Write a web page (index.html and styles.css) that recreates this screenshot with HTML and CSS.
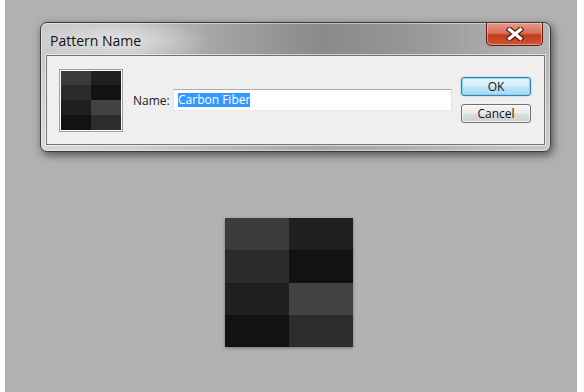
FILE: index.html
```html
<html>
<head>
    <title>Pattern Name</title>
    <link rel="stylesheet" href="styles.css">
</head>
<body>
    <div class="canvas">
        <div class="dialog">
            <div class="titlebar">
                <span class="title">Pattern Name</span>
                <button class="close" type="button">
                    <svg width="18" height="14" viewBox="0 0 18 14">
                        <path d="M3.5 2.5 L14.5 11.5 M14.5 2.5 L3.5 11.5" stroke="#5a1a10" stroke-width="5.5" stroke-linecap="square"/>
                        <path d="M3.5 2.5 L14.5 11.5 M14.5 2.5 L3.5 11.5" stroke="#ffffff" stroke-width="3.2" stroke-linecap="square"/>
                    </svg>
                </button>
            </div>
            <div class="client">
                <div class="thumb">
                    <div class="swatch">
                        <i class="c1"></i><i class="c2"></i>
                        <i class="c3"></i><i class="c4"></i>
                        <i class="c2"></i><i class="c5"></i>
                        <i class="c4"></i><i class="c6"></i>
                    </div>
                </div>
                <span class="label">Name:</span>
                <div class="field"><span class="selected">Carbon Fiber</span></div>
                <div class="buttons">
                    <button class="btn btn-ok" type="button">OK</button>
                    <button class="btn" type="button">Cancel</button>
                </div>
            </div>
        </div>

        <div class="swatch big">
            <i class="c1"></i><i class="c2"></i>
            <i class="c3"></i><i class="c4"></i>
            <i class="c2"></i><i class="c5"></i>
            <i class="c4"></i><i class="c6"></i>
        </div>
    </div>
</body>
</html>
```

FILE: styles.css
```css
body {
    margin: 0;
    background-color: #ffffff;
    font-family: "Open Sans", "Noto Sans", sans-serif;
}

.canvas {
    margin-left: 5px;
    width: 572px;
    height: 392px;
    background-color: #b1b1b1;
    display: flex;
    flex-direction: column;
    overflow: hidden;
}

/* fenetre du dialogue */
.dialog {
    margin: 22px 0 0 35px;
    width: 509px;
    height: 128px;
    border: 1px solid #3b3b3b;
    border-radius: 7px;
    box-shadow: 2px 3px 8px rgba(0, 0, 0, 0.55), inset 0 0 0 1px rgba(255, 255, 255, 0.45);
    background:
        radial-gradient(ellipse 90px 22px at 80px 18px, rgba(255, 255, 255, 0.55), rgba(255, 255, 255, 0)),
        linear-gradient(to bottom, rgba(255, 255, 255, 0) 30%, rgba(255, 255, 255, 0.25) 90%),
        linear-gradient(to right, #cbcbcb 0%, #c0c0c0 18%, #a4a4a4 35%, #8a8a8a 55%, #969696 72%, #b8b8b8 100%);
    display: flex;
    flex-direction: column;
}

.titlebar {
    height: 32px;
    display: flex;
    justify-content: space-between;
    align-items: flex-start;
}

.title {
    padding: 8px 0 0 9px;
    font-size: 14px;
    line-height: 19px;
    color: #111;
}

.close {
    margin-right: 7px;
    width: 57px;
    height: 23px;
    padding: 0;
    border: 1px solid #5e1b10;
    border-top: none;
    border-radius: 0 0 5px 5px;
    background: linear-gradient(to bottom, #e59a89 0%, #d9705a 45%, #c23a1b 55%, #cf5535 100%);
    box-shadow: inset 0 0 0 1px rgba(255, 210, 200, 0.5);
    display: flex;
    align-items: center;
    justify-content: center;
}

.client {
    margin: 0 5px 0 5px;
    height: 88px;
    border: 1px solid #737373;
    box-shadow: 0 0 0 1px rgba(255, 255, 255, 0.6);
    background-color: #efefef;
    display: flex;
    align-items: center;
    padding: 0 13px 0 12px;
}

.thumb {
    border: 1px solid #a0a0a0;
    padding: 1px;
    background-color: #fafafa;
}

.swatch {
    width: 60px;
    height: 59px;
    display: grid;
    grid-template-columns: 1fr 1fr;
    grid-template-rows: repeat(4, 1fr);
}

.swatch i {
    display: block;
}

.c1 { background-color: #3b3b3b; }
.c2 { background-color: #1f1f1f; }
.c3 { background-color: #2b2b2b; }
.c4 { background-color: #121211; }
.c5 { background-color: #424241; }
.c6 { background-color: #2d2c2b; }

.label {
    width: 40px;
    margin-left: 10px;
    font-size: 12px;
    color: #1a1a1a;
}

.field {
    width: 273px;
    height: 20px;
    border: 1px solid #abadb3;
    border-color: #abadb3 #dbdfe6 #e3e9ef #e2e3ea;
    background-color: #ffffff;
    padding-left: 4px;
    display: flex;
    align-items: center;
}

.selected {
    background-color: #3399ff;
    color: #ffffff;
    font-size: 12px;
    line-height: 14px;
}

.buttons {
    margin-left: 9px;
    display: flex;
    flex-direction: column;
    gap: 8px;
}

.btn {
    width: 70px;
    height: 19px;
    padding: 0;
    border: 1px solid #707070;
    border-radius: 3px;
    background: linear-gradient(to bottom, #f2f2f2 0%, #ebebeb 48%, #dddddd 52%, #cfcfcf 100%);
    box-shadow: inset 0 0 0 1px rgba(255, 255, 255, 0.7);
    font-family: "Open Sans", "Noto Sans", sans-serif;
    font-size: 12px;
    line-height: 16px;
    color: #111;
}

.btn-ok {
    border-color: #3c7fb1;
    background: linear-gradient(to bottom, #e8f6fd 0%, #d4eefb 48%, #bfe4f8 52%, #a8d9f2 100%);
    box-shadow: inset 0 0 0 1px rgba(120, 210, 240, 0.8), 0 0 2px rgba(60, 160, 220, 0.6);
}

.big {
    margin: 66px 0 0 220px;
    width: 128px;
    height: 129px;
    box-shadow: 0 1px 3px rgba(0, 0, 0, 0.35);
}
```
